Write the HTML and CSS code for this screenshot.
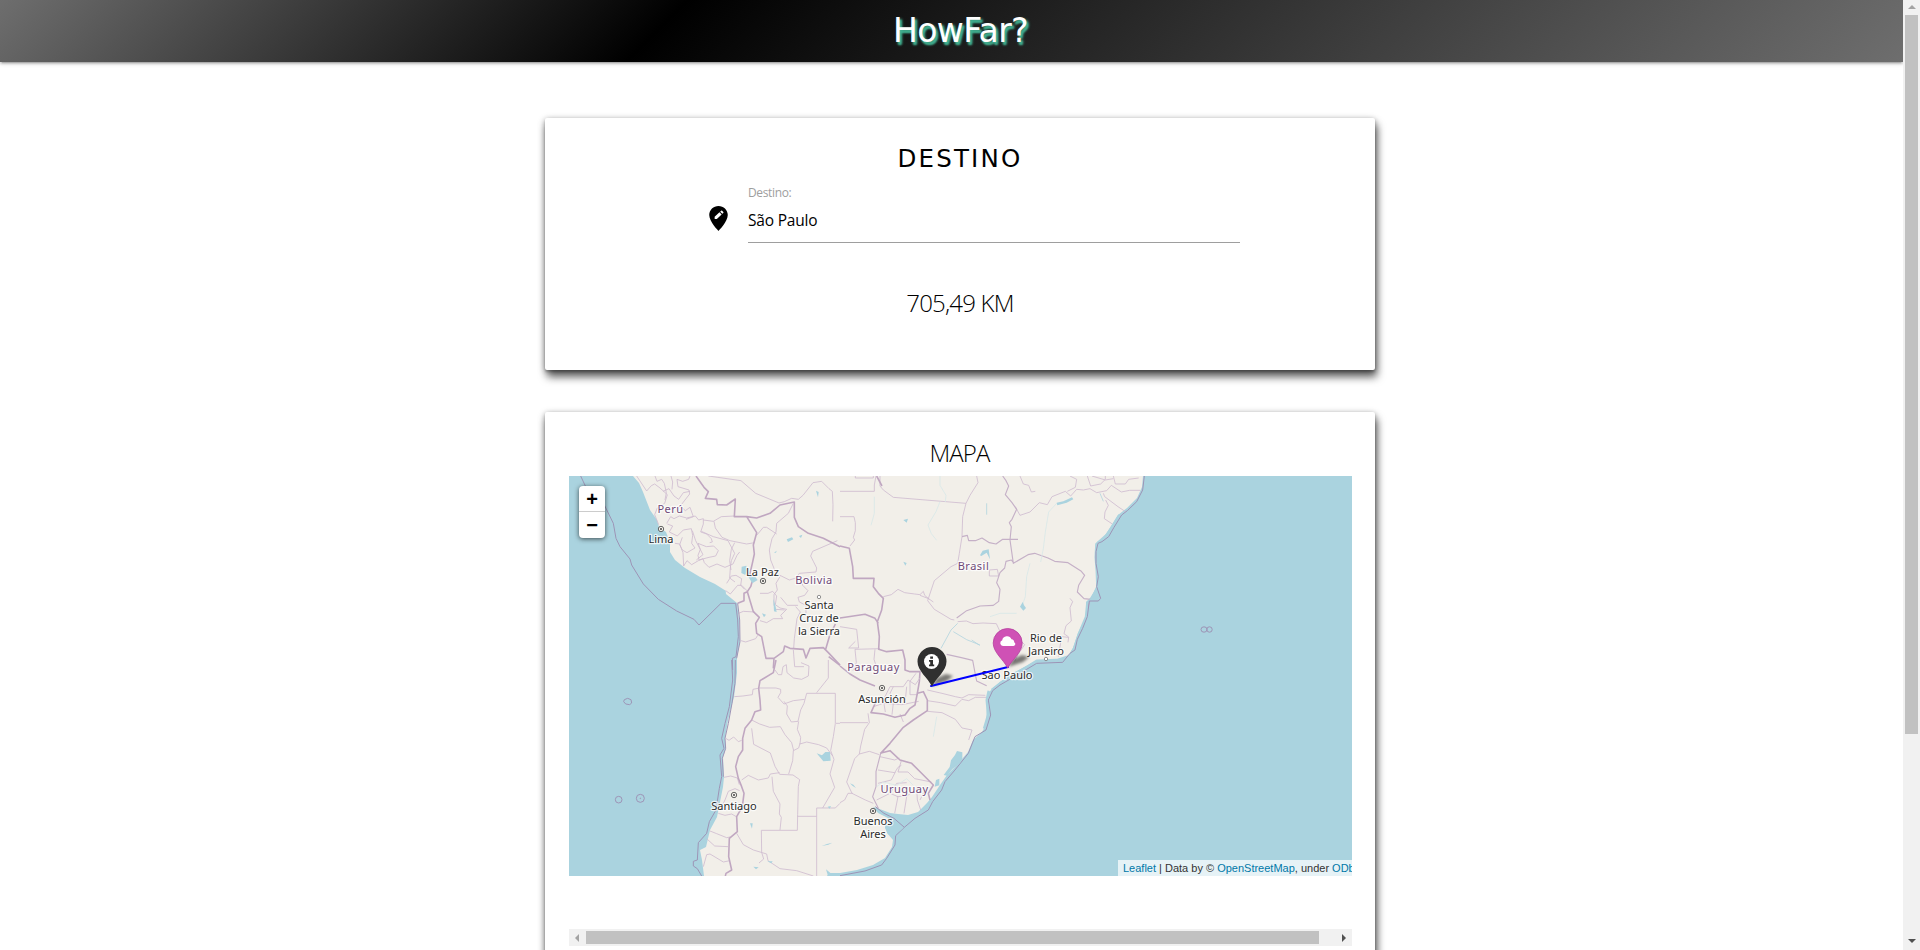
FILE: index.html
```html
<!DOCTYPE html>
<html lang="pt-BR">
<head>
<meta charset="utf-8">
<title>HowFar?</title>
<link rel="stylesheet" href="styles.css">
</head>
<body>
<div class="window">
  <div class="page">
    <header class="navbar"><h1 class="brand">HowFar?</h1></header>
    <main class="content">
      <section class="card card-destination">
        <h2 class="card-title">DESTINO</h2>
        <div class="field">
          <svg class="field-icon" viewBox="0 0 24 24"><path d="M12 0C7.2 0 3.1 3.700 3.100 8.700c0 6.300 8.900 15.300 8.900 15.300s8.900-9 8.900-15.300C20.900 3.700 16.800 0 12 0zM10.400 12.500H8.300v-2.100l4.600-4.300 2.100 2zM15.700 7.500l-2.100-2 .9-.9q.5-.4 1 0l1.100 1.100q.4.5 0 .9z"/></svg>
          <div class="field-body">
            <label class="field-label">Destino:</label>
            <div class="field-input">São Paulo</div>
          </div>
        </div>
        <p class="distance">705,49 KM</p>
      </section>
      <section class="card card-map">
        <h3 class="map-title">MAPA</h3>
        <div class="map">
          <svg class="map-canvas" viewBox="569 476 783 400">
            <defs>
              <filter id="soft" x="-50%" y="-50%" width="200%" height="200%"><feGaussianBlur stdDeviation="1.6"/></filter>
            </defs>
            <path class="land" d="M633 476L639 483 643 492 650 510 657 520 659 527 666 532 670 543 670 552 675 560 685 568 700 577 715 584 725.700 590.700 726 594 737 603 739 620 740 642 737 657 737 673 734 697 728 720 725 738 726 748 723 757 724 777 723 787 719 807 717 817 710 830 706 847 700 850 702 860 704 876H827L829 873 840 873 857 870 873 865 885 858 892 847 893 840 887 833 885 827 888 818 878 813 873 807 877 808 890 813 898 814 908 815 918 812 927 803 932 797 940 785 947 775 957 765 968 752 973 740 982 732 986 725 987 707 988 690 987 710 988 693 993 688 1000 682 1013 673 1028 665 1037 660 1057 660 1068 657 1073 648 1078 633 1086 617 1086 602 1090 598 1097 587 1096 570 1095 557 1097 542 1103 538 1112 525 1118 515 1127 508 1137 498 1142 487 1143 476Z"/>
            <g transform="translate(560 430) scale(.333333)">
              <g class="border thin">
                <path d="M230 138l30 45 14-16 10-5 16 12 22 20-8 26-22 14-8 20 12 30M285 138l6 16 14-6 8 12 6 28-4 22M333 138l5 18-2 22M390 138l-4 10-18 6-17-6 3 22 33 10 2 12-28 36 15 14 14-10 10 28-22 8M309 184l18-8 15 22 14 10 14-20 20-4M320 280l12-20 10 6 16-8 22 6 26-6 10 12 14-4 0 16-8 24 18 6 14 14 3 10-8 2M322 282l16 6-10 18 24 12 18-18 24-4 4 20-3 24 10 14-24 14-14-8-8-16 8-22M345 340l14 2 10 26 2 40 10-16 14 12 20-12 14-6 4 12 14 14 24-10 24 10 24-10 12-26 8-10M424 304l36 16 44 12 20 38-10 22-3 22-2 30 16 12M397 302l10 30 22 42-20 16M414 340l25 10 22-2 14 14-8 16-20 4-30 8-3-14 7-18zM430 270l30 4 24-14 40-2M462 274l4 20 20 28 24 10 50 10 24-4M524 338l-10 20-5 34 4 28M500 460l14-22 14-2 17 10-3 20 12 12M497 482l14 10 22-26 12 0 18 18"/>
                <path d="M445 138l98 14 44 38 70 29 16-4 22-10 20 3 14-12 30-38 26-4 22 22 10 8 2 40-1 50M700 220l-15 30-35 30-2 26-12 20-8 34 4 30 16 40 40 20 20-6 10-14 50-4 2-12-10-20-8-16 6-14 74-32M590 316l20-24 10 0 30 20M660 440l-12 20 4 20-10 14 0 30 4 14 28 2M720 440l8 26 16 16-10 14-20 6 4 14 20 10 0 30M536 550l14-6 34 2M543 632l14 4 30-10 6-10M600 490l24 0 14-6 12 14-4 26 14 10 20 4-18 18 6 10-28 0-20 12-20-6M662 502l20 24 32 0M707 530l14 16-10 20-8 60-2 30M700 660l4 50 28 0"/>
              </g>
              <path class="border thick" d="M408 138L432 172 445 185 436 205 470 208 472 224 500 225 526 207 523 260 560 260 590 264 630 250 660 225 703 216 703 262 715 290 745 310 790 325 840 350M560 260L590 308 580 345 583 372 577 400 570 430 578 450 572 470 562 485 552 490 552 512 533 520M562 485L580 545 598 562 587 580 590 610 605 620 618 685 642 685 640 715M642 685L670 665 674 648 690 655 730 658 738 684 750 655 790 653 805 668 840 705M797 658L808 620 826 582"/>
              <path class="sea-border" d="M62 138l15 32M133 225L160 280 168 325 180 350 210 387 215 405 250 462 295 508 350 543 402 568 417 585 483 520 527 520 533 570 535 620 528 680 517 685 518 720M533 520L539 570 540 635 530 685"/>
              <path class="water" d="M545 410l14-3 2 14-5 14-12-6zM565 440l20 0 8 10-16 10zM680 328l16-6 4 6-16 8zM717 318l10-4-4 10zM768 182l8 4-2 16zM606 550l12 4-6 8zM640 506l6 20 4 20-8-2zM642 368l8-6-2 6z"/>
            </g>
            <g transform="translate(840 470) scale(.333333)">
              <g class="border thin">
                <path d="M0 64h103V45l5-27M120 18v30l10 12 30 22 218 18 12-24 24-38-4-20M378 100l-10 40-2 60-8 50-5 30-20 10-50 42-20 60 20 26 50 30 10 2M0 140h42l4 18 0 24-6 20 4 8-14 18M46 18v6h54v-6M130 380l24-6 20-16 20 10 30 4 16 2 10-10 4 12 14 12M240 376l26 10 14 10M353 455l26-2 20 8 30-2 40 2 14 30 10 10M526 110l14 26 30-10 28-28 24 6 14-24 40-16 16 14 18-20 20 2 20-4 20 12 30-6 14-16 30 20 25-5 32 0M540 18l10 24 16 4 8 20 12-2M690 18l20 10-4 24-24 12M742 18l10 30 30-6 14-14 0-10M820 18l6 24 30 0 10-14 30-4M790 70l4 10 40 30 24 16M797 90l8 16-10 20-2 20 24 16M756 18l40 12 24-4M448 300l24-2 4 20-28 0z"/>
                <path d="M0 470l50 8 6 56-30 0 20-20M45 538l75-2M45 538l4 40-10 24M105 538l-3 30 10 30M484 490l20 10 30 4 20 20-20 30-10 20M690 385l8 10-8 18 4 40-16 14-6 24 14 10-2 16M665 500l20 2M665 500l-10 60M262 660l44 10 40 10 20 4 20-10 50 2"/>
              </g>
              <path class="border mid" d="M488 18l10 14 8 16-10 26 20 24 14 20-14 30-8 10 6 12-4 40 10 70 44-26 20-4 40 14 20 10 40 4 40 26 10 12-18 30-4 20 20 20 20 2-8 22M366 200l16-4 4 16 20 0 20-8 22 14 20 4 20-14 46 0M522 280l-8-10-16 4-4 20-14 14-10 30 10 20-4 36-16 12-40 2-40 14-30 22M320 553l44 10 34 8 6 32 6 30 30 14"/>
              <path class="border thick" d="M0 228L28 235 38 290 40 325 102 325 100 350 115 370 130 385 125 420 112 455 118 500 116 538 140 545 188 540 195 570 195 600 210 605 240 605 238 635 232 670M110 18l16 30M0 444L75 433 105 445 115 460"/>
              <path class="river" d="M103 80l0 50-10 36M300 18l0 28 18 30-2 20M300 95l-12 30-24 40 10 26 16 20M650 100l-24 26-10 60-6 50-8 40M570 280l-10 40-4 60-10 30M450 440l30-10 50 0"/>
              <path class="river strong" d="M353 460l-20 20-30 55M440 100l0 34M340 485l40 24 40 16M395 510l24 16M780 70l10 24"/>
              <path class="water" d="M650 98l20-4 26-12 4 6-20 10-28 8zM420 256l8-14 18-4 4 30-10-20-16 10zM540 410l8-14 4 10 6 8-8 8zM190 275l10 4-4 8zM190 150l14-4-4 12z"/>
              <path class="coast-water" d="M838 135L822 160 800 195 778 214 769 222 767 262 770 300 772 350 755 388 742 398 738 440 717 490 702 535 688 558 650 570 590 572 565 588 520 614 480 640 455 660"/>
              <path class="sea-border" d="M913 18L908 60 890 95 862 122 845 135 822 172 806 200 786 215 774 220 768 245 768 280 775 320 770 350 782 385 775 393 748 393 742 440 728 475 712 508 705 540 690 550 668 577 590 580 560 598 520 622 480 645 458 662"/>
            </g>
            <g transform="translate(560 660) scale(.333333)">
              <g class="border thin">
                <path d="M523 110l26-2 28-4 2-16 20-4M598 84l50 0 14 4 0 10-8 14 18 20 28-10 34-4M645 30l10 14 10 0 4-24 10-6 2 24 20 16 24 4 20-10 2-30-24-10M770 98l35-44V0M740 100h86v90l-6 40-8 42 10 26-12 44 14 40-36 62M740 100l-8 30-10 20-8 34-20 2-14-24 2-24-10-14M716 184l-4 24 10 24-2 20 20-6 36 8 24 10 18 24M720 250l-4 14-16 8-2 30-12 40M575 180l24 12 30 10 32-2 14 24 20 24 6 24M575 205l6 48 50 26 14 40 14 24 40 2 20 14-4 20-2 84-1 48H604l1 66 6 20-14 12M545 360l20-14 30 14 30-6 6-12 28-4M636 350l4 44 20 38-2 30 6 10-4 38M712 469h58M770 648V444h56l14-14M828 190h12M497 235l10 6 14-10 14 14 10-4M492 352l20-4 20 6 6 20M485 440l10-20 10-26 20-8 14 6M475 460l20 6 20-4 14 8M450 513l20 8 30 12 10-2M440 536l24 22 40 2M430 620l10-36 10-2 40 24 20-4M530 520l20 34 30 16 40 12 4 20 36 24 50 6 50 16"/>
              </g>
              <path class="border thick" d="M648 0L640 38 600 62 596 85 600 120 602 150 585 155 575 180 555 205 548 235 548 270 535 290 527 320 535 355 545 380 552 400 547 440 530 470 532 515 508 535 506 590 515 630 498 640 496 648M806 -10L840 16"/>
              <path class="sea-border" d="M515 0L518 60 508 140 495 190 485 235 492 265 480 285 485 350 478 385 468 450 448 485 440 520 415 548 412 600 400 604 400 618 412 626 425 648M526 0L525 70 516 130 505 190 495 235 497 265 487 295 490 350"/>
              <path class="sea-border" d="M193 119l10-4 10 4 2 10-6 5-12-2-6-7z"/>
              <circle class="sea-border" cx="176" cy="419" r="10"/><circle class="sea-border" cx="241" cy="415" r="12"/><circle class="sea-border" cx="241" cy="415" r="1"/>
              <path class="water" d="M770 280l16 6 10-10 14 0 2 26-22 2zM570 490l8 0-2 16zM580 620l16 2-8 6zM622 604l16 0-4 6zM785 558l16-6 16-4-12 6zM803 440l10-2-4 8zM798 628l14 12 28 0v8h-36z"/>
            </g>
            <g transform="translate(840 640) scale(.333333)">
              <g class="border thin">
                <path d="M0 248h84M84 220l4 28-14 20-12 50-4 24-14 14-24 70 16 34 40 20 24 10M58 342l30-8 30 10M0 488l14-8 10-20 14 0M130 180l6 36M160 140l-10 20 10 30-4 34M100 200l30-10 56 4 50-10M180 222l10 24M130 180l20-40 40 0 14-20 22 14 14-20M200 140l-4 40M228 100l-18 24 0 40 24 0M262 182l40 6 44 10 20-20 20 4 20-10 34 0"/>
                <path d="M262 214l44 4 40 20 20 26 30 6-10 30M120 350l44 10 14-6M114 390l50 8 10-16 10-6M114 430l40-10 12-24M110 480l40-20 20-30 30-2M184 362l-10 34 30 0 20 20 50 10M150 460l24 10-10 50M170 470l30-2 30-20M200 470l-8 50M230 440l2 40 10 30M260 440l-20 40"/>
              </g>
              <path class="border thick" d="M0 78L30 102 60 120 105 138M110 180L93 218 130 222 165 232 195 225 210 205 225 195 232 160 250 155 262 180 262 212 220 240 190 262 150 310 122 340M120 340L150 332 180 360 215 370 235 390 280 435 265 460 270 480"/>
              <path class="border mid" d="M122 340L108 395 108 440 98 470 115 505"/>
              <path class="sea-border" d="M458 152L445 180 452 225 438 270 405 290 385 340 345 390 315 425 305 450 278 485 265 510 225 535 193 562 167 587 165 615 140 655 125 675 75 693 0 707M106 500L132 520 162 535 193 562"/>
              <path class="river" d="M110 440l20-14 40 10 30-20 20 20M290 230l-10 60"/>
              <path class="water" d="M345 345l6-12 16 4 0 20-10 16-20 14-16 20-10-2 18-24 4-20zM284 440l4-20 10-4 0 20zM145 535l20 10 26 18-28 24-18-4-10-20zM30 430l10 4 8 10-10-6z"/>
              <path class="coast-water" d="M446 152L440 180 444 225 432 266"/>
            </g>
            <g class="labels">
              <text class="country" x="670.500" y="513">Perú</text>
              <text class="country" x="814" y="584">Bolivia</text>
              <text class="country" x="973.500" y="570">Brasil</text>
              <text class="country" x="873.500" y="671">Paraguay</text>
              <text class="country" x="904.500" y="793">Uruguay</text>
              <text x="661" y="543">Lima</text>
              <text x="762.500" y="575.500">La Paz</text>
              <text x="819" y="609">Santa</text><text x="819" y="622">Cruz de</text><text x="819" y="635">la Sierra</text>
              <text x="1046" y="642">Rio de</text><text x="1046" y="655">Janeiro</text>
              <text x="1007" y="679">São Paulo</text>
              <text x="882" y="703">Asunción</text>
              <text x="734" y="809.500">Santiago</text>
              <text x="873" y="825">Buenos</text><text x="873" y="838">Aires</text>
            </g>
            <g class="capital">
              <circle cx="661" cy="529" r="2.700"/><circle cx="763" cy="581" r="2.700"/><circle cx="882" cy="688" r="2.700"/><circle cx="734" cy="795" r="2.700"/><circle cx="873" cy="811" r="2.700"/>
            </g>
            <g class="capital-dot">
              <circle cx="661" cy="529" r="1"/><circle cx="763" cy="581" r="1"/><circle cx="882" cy="688" r="1"/><circle cx="734" cy="795" r="1"/><circle cx="873" cy="811" r="1"/>
            </g>
            <g class="town"><circle cx="819" cy="597" r="1.700"/><circle cx="1046" cy="659" r="1.700"/></g>
            <g class="isle"><ellipse cx="1204" cy="629.500" rx="3" ry="2.700"/><ellipse cx="1209.500" cy="629.500" rx="2.700" ry="2.700"/></g>
            <g class="pin-shadow" filter="url(#soft)">
              <path d="M932 686l5-8 9-4 7 2-6 5z"/><path d="M1008 667l5-8 9-4 7 2-6 5z"/>
            </g>
            <path class="route" d="M931 686L1008 667"/>
            <path class="pin-dark" d="M932 686.500C928 678 917.500 671 917.500 661.500a14.500 14.500 0 0 1 29 0C946.500 671 936 678 932 686.500z"/>
            <circle class="glyph" cx="931.500" cy="661.500" r="7.500"/>
            <path class="glyph-dark" d="M930.200 656.500h2.800v2.200h-2.800zM929 660h4v4.500h1.200v1.800H929v-1.800h1.200v-2.700H929z"/>
            <path class="pin-pink" d="M1007.700 668C1003.500 659.500 993.200 652.500 993.200 643a14.500 14.500 0 0 1 29 0C1022.200 652.500 1012 659.500 1007.700 668z"/>
            <path class="glyph" d="M1003 646a3 3 0 0 1-.8-5.800 4.900 4.900 0 0 1 9.300-1 3 3 0 0 1 2.700 3 2 2 0 0 1-1 3.800z"/>
          </svg>
          <div class="zoom"><span class="zoom-key">+</span><span class="zoom-key">−</span></div>
          <div class="credit"><a>Leaflet</a> | Data by © <a>OpenStreetMap</a>, under <a>ODbL</a></div>
        </div>
        <div class="hscroll"><i class="arrow arrow-left"></i><i class="thumb"></i><i class="arrow arrow-right"></i></div>
      </section>
    </main>
  </div>
  <div class="vscroll"><i class="arrow arrow-up"></i><i class="thumb"></i><i class="arrow arrow-down"></i></div>
</div>
</body>
</html>
```
FILE: styles.css
```css
* { box-sizing: border-box; }
body { margin: 0; background: #fff; color: #000; font-family: "Open Sans", "Noto Sans", sans-serif; }
h1, h2, h3, p { margin: 0; font-weight: 400; }
.window { display: flex; height: 950px; overflow: hidden; }
.page { flex: 1; height: 950px; overflow: hidden; }

.navbar {
  display: flex; justify-content: center; height: 62px; padding-left: 18px;
  background: linear-gradient(135deg, #6e6e6e 0%, #000 35%, #6e6e6e 100%);
  box-shadow: 0 2px 2px 0 rgba(0,0,0,.14), 0 3px 1px -2px rgba(0,0,0,.12), 0 1px 5px 0 rgba(0,0,0,.2);
}
.brand { padding-top: 1px; font: 400 33px/60px "DejaVu Sans", sans-serif; letter-spacing: -.6px; color: #fff; text-shadow: 2px 2px 3px #40b090, 2px 3px 2px #40b090; }

.content { display: flex; flex-direction: column; align-items: center; gap: 42px; padding: 56px 0 0 17px; }
.card {
  width: 830px; border-radius: 2px; background: #fff;
  box-shadow: 2px 7px 8px rgba(0,0,0,.6), 0 2px 8px rgba(0,0,0,.2), 0 2px 2px 0 rgba(0,0,0,.14), 0 1px 5px 0 rgba(0,0,0,.2);
}
.card-destination { height: 252px; padding-top: 21px; text-align: center; }
.card-title { font: 400 24.500px/39px "DejaVu Sans", sans-serif; letter-spacing: 2.200px; }
.field { display: flex; width: 532px; margin-left: 161px; gap: 17px; text-align: left; }
.field-icon { width: 25px; height: 25px; margin-top: 28px; flex: none; }
.field-body { width: 492px; flex: none; border-bottom: 1px solid #9e9e9e; height: 65px; }
.field-label { display: block; height: 30px; padding-top: 7px; font-size: 12px; line-height: 16px; letter-spacing: -.35px; color: #9e9e9e; }
.field-input { font-size: 15.500px; line-height: 24px; letter-spacing: -.2px; }
.distance { margin-top: 40px; font-size: 24px; font-weight: 300; line-height: 40px; letter-spacing: -.8px; }

.card-map { height: 600px; padding: 21px 23px 0 24px; }
.map-title { height: 43px; font-size: 24px; font-weight: 300; line-height: 40px; letter-spacing: -.9px; text-align: center; padding-right: 2px; }
.map { position: relative; height: 400px; overflow: hidden; background: #aad3df; }
.map-canvas { display: block; width: 783px; height: 400px; }
.land { fill: #f2efe9; }
.border, .sea-border, .river, .coast-water { fill: none; stroke-linejoin: round; }
.border { stroke: #c0a7c1; }
.thin { stroke-width: 2.500; stroke: #cfbcd0; }
.mid { stroke-width: 3.400; stroke: #c5b0c7; }
.thick { stroke-width: 4.800; }
.sea-border { stroke: #9d94b6; stroke-width: 3; }
.isle { fill: none; stroke: #9d94b6; stroke-width: 1; }
.river { stroke: #d9e8e8; stroke-width: 2.500; }
.strong { stroke: #b3d5df; }
.coast-water { stroke: #aad3df; stroke-width: 7; }
.water { fill: #aad3df; }
.labels { font: 11px "Noto Sans", sans-serif; text-anchor: middle; fill: #2b2b2b; stroke: rgba(255,255,255,.75); stroke-width: 2.500px; stroke-linejoin: round; paint-order: stroke; }
.country { fill: #704a78; letter-spacing: .5px; }
.capital { fill: #f2efe9; stroke: #555; stroke-width: .9; }
.capital-dot { fill: #444; }
.town { fill: #fff; stroke: #777; stroke-width: .8; }
.route { stroke: #00f; stroke-width: 2; stroke-linecap: round; }
.pin-shadow { fill: rgba(0,0,0,.5); }
.pin-dark { fill: #303030; }
.pin-pink { fill: #cf51b5; stroke: #b53f9d; stroke-width: .8; }
.glyph { fill: #fff; }
.glyph-dark { fill: #303030; }

.zoom { position: absolute; left: 10px; top: 10px; width: 26px; border-radius: 4px; background: #fff; box-shadow: 0 1px 5px rgba(0,0,0,.65); }
.zoom-key { display: block; height: 26px; font: bold 20px/26px "Liberation Sans", sans-serif; text-align: center; }
.zoom-key:first-child { border-bottom: 1px solid #ccc; }
.credit { position: absolute; left: 549px; bottom: 0; height: 16px; padding-left: 5px; background: rgba(255,255,255,.7); color: #333; font: 11px/16px "Liberation Sans", sans-serif; white-space: nowrap; width: 260px; }
.credit a { color: #0078a8; }

.hscroll { display: flex; align-items: center; height: 17px; margin-top: 53px; background: #f1f1f1; }
.hscroll .thumb { width: 733px; height: 13px; background: #c1c1c1; }
.vscroll { display: flex; flex-direction: column; align-items: center; width: 17px; height: 950px; background: #f1f1f1; }
.vscroll .thumb { width: 13px; height: 719px; background: #c1c1c1; }
.arrow { flex: none; border: 4px solid transparent; }
.arrow-left { margin: 0 7px 0 2px; border-right-color: #a3a3a3; }
.arrow-right { margin-left: 23px; border-left-color: #505050; }
.arrow-up { margin: 1px 0 6px; border-bottom-color: #a3a3a3; }
.arrow-down { margin: auto 0 3px; border-top-color: #505050; }
```
